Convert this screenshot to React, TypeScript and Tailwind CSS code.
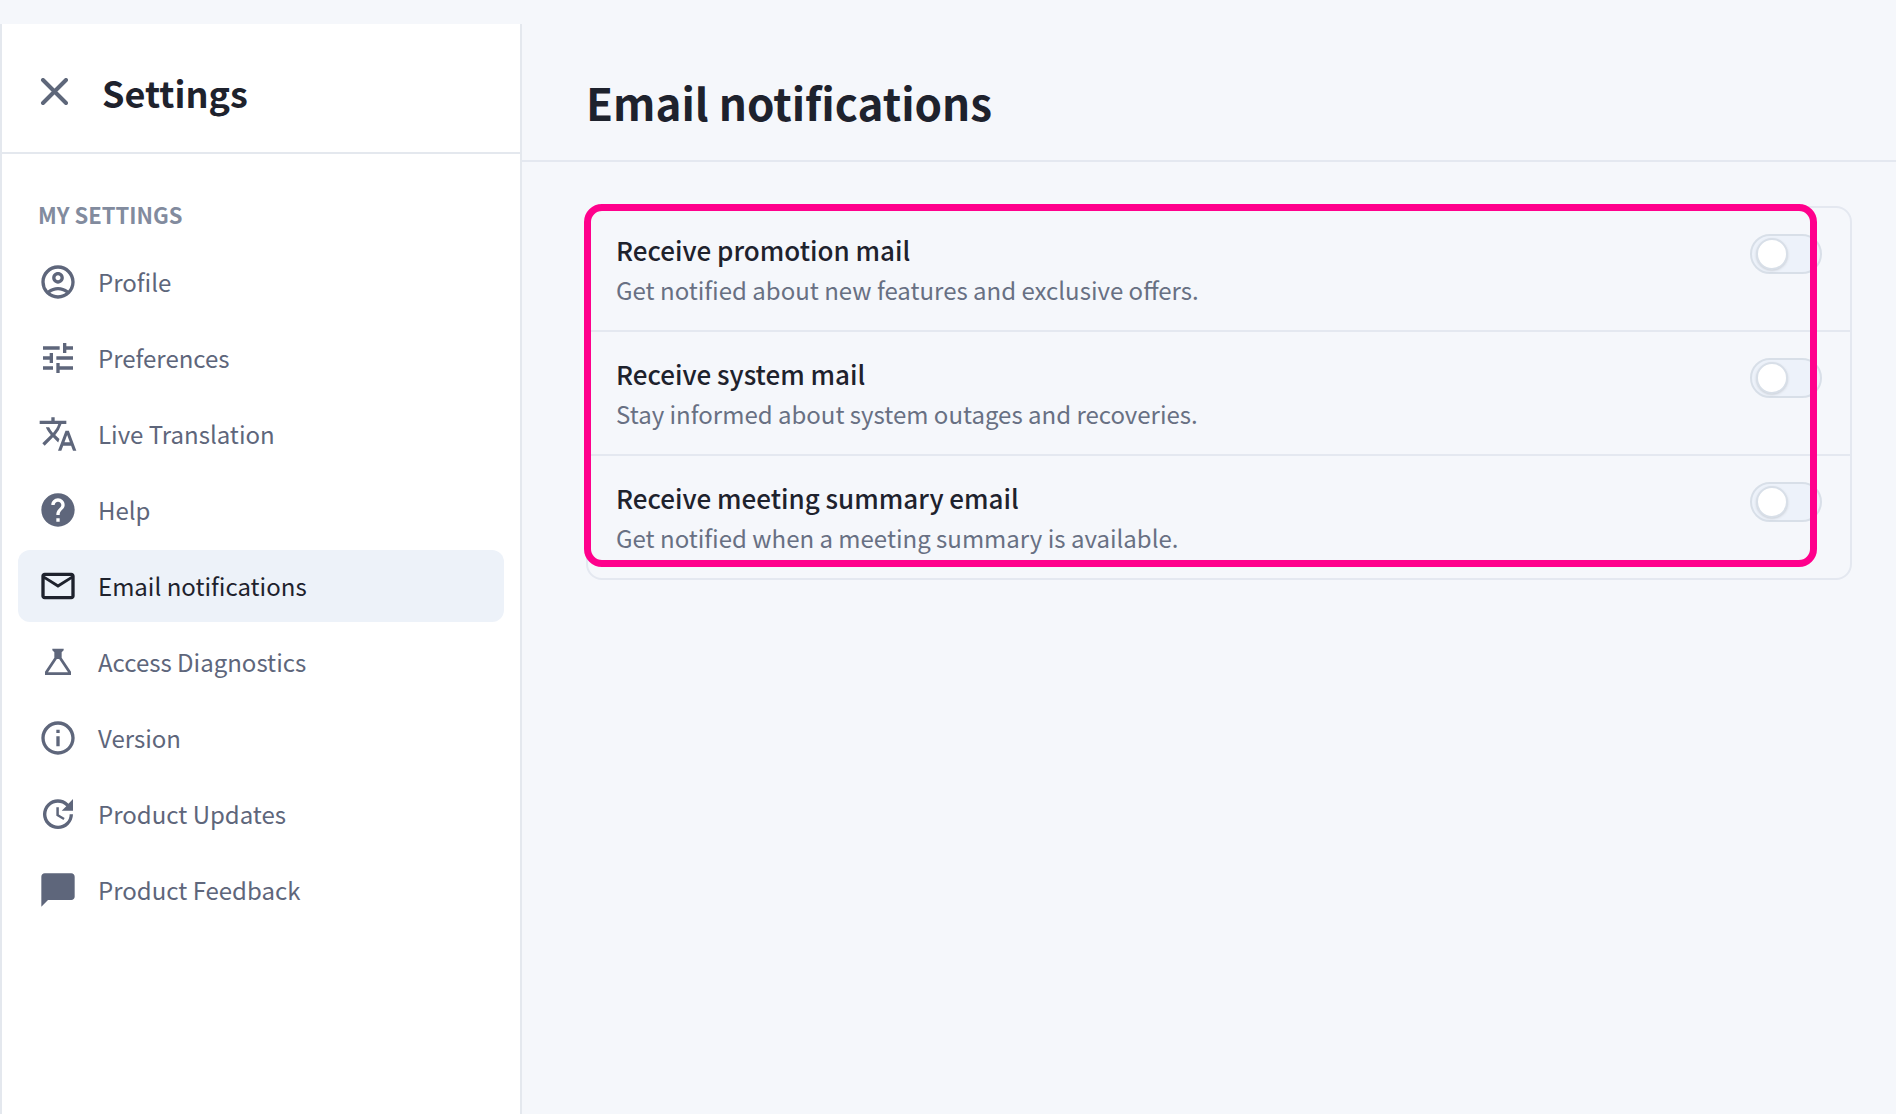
import React, { useState } from 'react';
import type { IconType } from 'react-icons';
import {
  MdChatBubble,
  MdHelp,
  MdInfoOutline,
  MdMailOutline,
  MdOutlineAccountCircle,
  MdTranslate,
  MdTune,
  MdUpdate,
} from 'react-icons/md';

const FlaskIcon: React.FC<{ size?: number; className?: string }> = ({ size = 24, className }) => (
  <svg width={size} height={size} viewBox="0 0 24 24" fill="currentColor" className={className}>
    <path
      fillRule="evenodd"
      d="M8.6 4H15.4V5L14.2 6.2V9.5L19.8 17.9V19.8H4.2V17.9L9.8 9.5V6.2L8.6 5ZM11.3 10.2L6 18.2H18L12.7 10.2Z"
    />
  </svg>
);

const CloseIcon = () => (
  <svg width="28" height="28" viewBox="0 0 28 28" fill="none" stroke="currentColor" strokeWidth="4" strokeLinecap="round">
    <path d="M3 2l23 23M26 2L3 25" />
  </svg>
);

interface NavItem {
  label: string;
  icon: IconType | typeof FlaskIcon;
}

const navItems: NavItem[] = [
  { label: 'Profile', icon: MdOutlineAccountCircle },
  { label: 'Preferences', icon: MdTune },
  { label: 'Live Translation', icon: MdTranslate },
  { label: 'Help', icon: MdHelp },
  { label: 'Email notifications', icon: MdMailOutline },
  { label: 'Access Diagnostics', icon: FlaskIcon },
  { label: 'Version', icon: MdInfoOutline },
  { label: 'Product Updates', icon: MdUpdate },
  { label: 'Product Feedback', icon: MdChatBubble },
];

const mailOptions = [
  {
    id: 'promotion',
    title: 'Receive promotion mail',
    description: 'Get notified about new features and exclusive offers.',
  },
  {
    id: 'system',
    title: 'Receive system mail',
    description: 'Stay informed about system outages and recoveries.',
  },
  {
    id: 'summary',
    title: 'Receive meeting summary email',
    description: 'Get notified when a meeting summary is available.',
  },
];

const Sidebar = () => {
  const active = 'Email notifications';

  return (
    <aside className="w-[522px] shrink-0 border-x-2 border-[#e4e8ee] bg-white">
      <div className="flex h-[130px] items-center gap-[34px] border-b-2 border-[#e4e8ee] pt-2 pl-[38px]">
        <button type="button" aria-label="Close settings" className="text-[#5e677a]">
          <CloseIcon />
        </button>
        <h2 className="text-[36px] leading-[52px] font-bold">Settings</h2>
      </div>

      <nav className="px-4 pt-11">
        <h3 className="mb-4 pl-5 text-[22px] leading-8 font-bold text-[#828b9e]">MY SETTINGS</h3>
        <ul className="flex flex-col gap-1">
          {navItems.map(({ label, icon: Icon }) => (
            <li key={label}>
              <a
                href="#"
                aria-current={label === active ? 'page' : undefined}
                className={`flex h-[72px] items-center gap-5 rounded-xl pl-5 text-2xl leading-9 ${
                  label === active ? 'bg-[#edf2f9] text-[#1e222d]' : 'text-[#5e667b]'
                }`}
              >
                <Icon size={40} className="shrink-0" />
                {label}
              </a>
            </li>
          ))}
        </ul>
      </nav>
    </aside>
  );
};

interface ToggleProps {
  id: string;
  checked: boolean;
  onChange: () => void;
}

const Toggle: React.FC<ToggleProps> = ({ id, checked, onChange }) => (
  <span className="relative mt-1 flex h-10 w-[72px] shrink-0">
    <input
      id={id}
      type="checkbox"
      role="switch"
      checked={checked}
      onChange={onChange}
      className="peer h-10 w-[72px] cursor-pointer appearance-none rounded-full border-2 border-[#d8dfe8] bg-[#edf2fa] checked:bg-blue-500"
    />
    <span className="pointer-events-none absolute top-1 left-1.5 size-8 rounded-full border-2 border-[#d8dfe8] bg-white shadow-sm peer-checked:left-9" />
  </span>
);

const App = () => {
  const [enabled, setEnabled] = useState<Record<string, boolean>>({});

  const toggle = (id: string) => setEnabled((prev) => ({ ...prev, [id]: !prev[id] }));

  return (
    <div className="flex min-h-screen bg-[#f5f7fb] pt-6 font-['Noto_Sans_CJK_SC',sans-serif] text-[#1e222d]">
      <Sidebar />

      <main className="min-w-0 flex-1">
        <header className="border-b-2 border-[#e4e8f0] pt-12 pb-7 pl-16">
          <h1 className="text-[44px] leading-[60px] font-bold">Email notifications</h1>
        </header>

        <div className="relative mt-11 mr-11 ml-16">
          <section className="divide-y-2 divide-[#e4e8f0] rounded-2xl border-2 border-[#e4e8f0]">
            {mailOptions.map(({ id, title, description }) => (
              <div key={id} className="flex items-start justify-between px-7 pt-[22px] pb-5">
                <label htmlFor={id}>
                  <span className="block text-[26px] leading-10 font-medium">{title}</span>
                  <span className="block text-2xl leading-10 text-[#687083]">{description}</span>
                </label>
                <Toggle id={id} checked={!!enabled[id]} onChange={() => toggle(id)} />
              </div>
            ))}
          </section>
          {/* highlight frame */}
          <div className="pointer-events-none absolute -top-0.5 right-[35px] bottom-[13px] -left-0.5 rounded-[18px] border-[7px] border-[#ff008c]" />
        </div>
      </main>
    </div>
  );
};

export default App;
